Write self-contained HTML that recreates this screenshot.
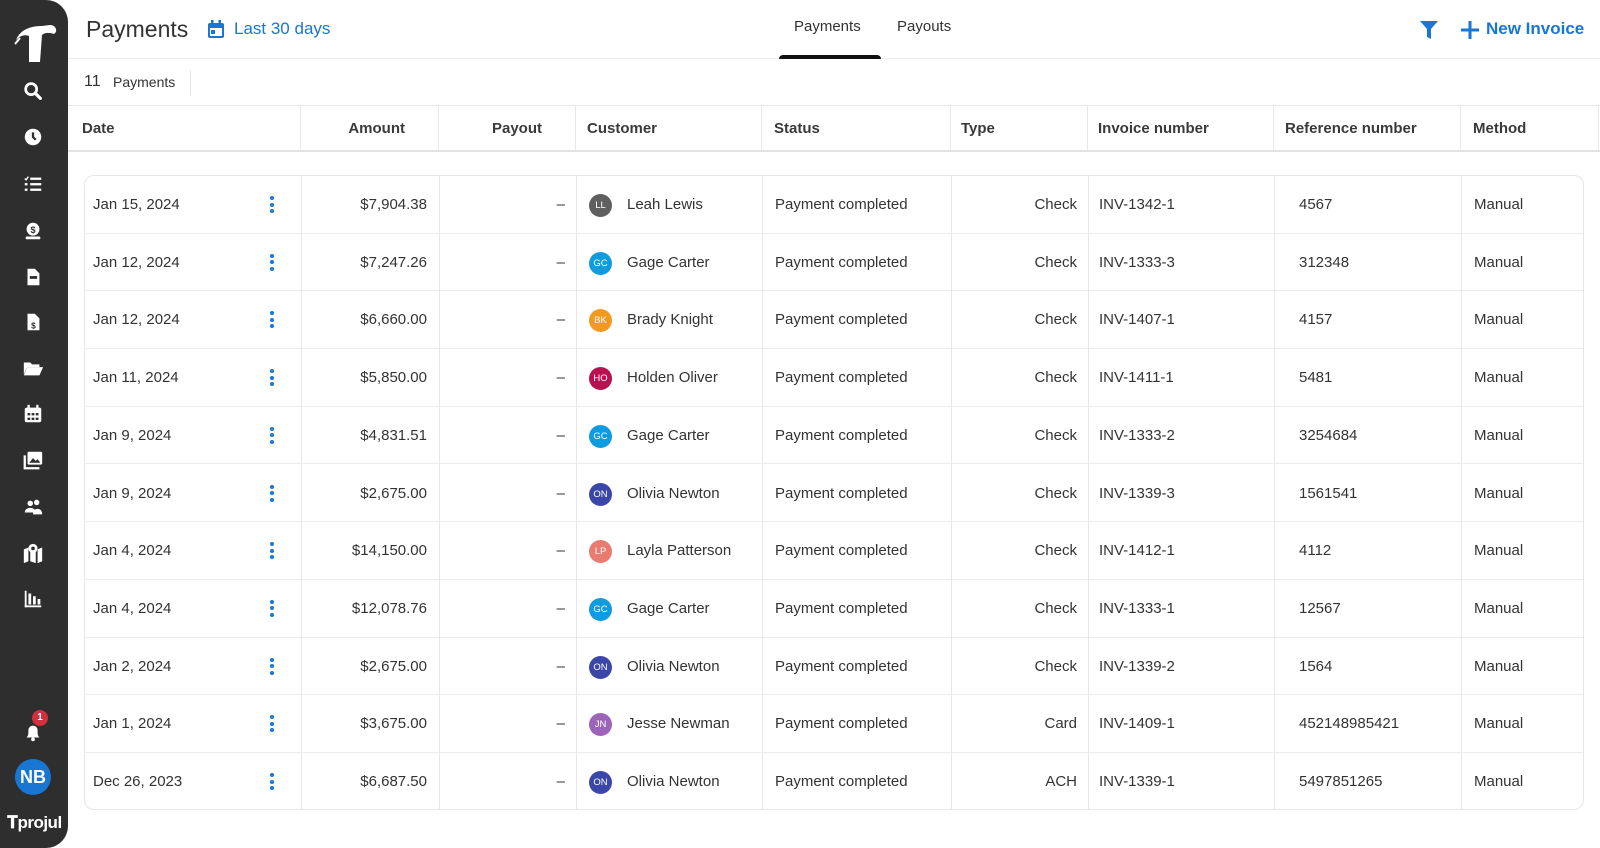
<!DOCTYPE html>
<html><head><meta charset="utf-8"><style>
*{box-sizing:border-box;margin:0;padding:0}
body{width:1600px;height:848px;overflow:hidden;background:#fff;font-family:"Liberation Sans",sans-serif;color:#333;position:relative}
.sb{position:absolute;left:0;top:0;width:68px;height:848px;background:#2e2e2e;border-radius:0 22px 22px 0}
.ic{position:absolute;left:22px;width:22px;height:22px}
.top{position:absolute;left:68px;top:0;right:0;height:59px;border-bottom:1px solid #eee}
.abs{position:absolute;white-space:nowrap}
.hdr{position:absolute;left:68px;top:105px;width:1532px;height:47px;border-top:1px solid #e8e8e8;border-bottom:2px solid #e3e3e3;font-weight:bold;font-size:15px;color:#3a3a3a}
.vl{position:absolute;top:0;bottom:0;width:1px;background:#e8e8e8}
.card{position:absolute;left:84px;top:175px;width:1500px;height:635px;border:1px solid #e6e6e6;border-radius:10px;overflow:hidden}
.row{position:absolute;left:0;width:1500px;height:57.7px;border-bottom:1px solid #ececec;font-size:15px;color:#333}
.row span{position:absolute;top:20px;white-space:nowrap}
.av{position:absolute;top:18px;width:23px;height:23px;border-radius:50%;color:#fff;font-size:9.5px;text-align:center;line-height:23px}
.dots{position:absolute;left:185px;top:20px;width:4px}
.dots i{display:block;width:4px;height:4px;border-radius:50%;background:#1976d2;margin-bottom:2.5px}
</style></head><body>
<div class="sb">
<svg style="position:absolute;left:12px;top:22px" width="46" height="42" viewBox="0 0 46 42"><path d="M4 18 C8 8 18 4 30 4 L38 3 C42 3 45 6 44 10 L42 12 C36 10 32 11 30 13 L28 40 L17 40 L17 14 C12 12 8 14 4 18Z" fill="#fff"/><path d="M3 22 L8 16" stroke="#fff" stroke-width="2"/></svg>
<svg class="ic" style="top:80px" viewBox="0 0 24 24"><circle cx="10" cy="10" r="6" stroke="#fff" stroke-width="3" fill="none"/><path d="M14.5 14.5 L20 20" stroke="#fff" stroke-width="3.5" stroke-linecap="round"/></svg>
<svg class="ic" style="top:126px" viewBox="0 0 24 24"><circle cx="12" cy="12" r="9" fill="#fff"/><path d="M12 7v5l3 3" stroke="#2e2e2e" stroke-width="2.5" fill="none"/></svg>
<svg class="ic" style="top:173px" viewBox="0 0 24 24" fill="#fff"><rect x="9" y="5" width="12" height="2.5"/><rect x="9" y="11" width="12" height="2.5"/><rect x="9" y="17" width="12" height="2.5"/><rect x="3" y="11" width="3" height="2.5"/><rect x="3" y="17" width="3" height="2.5"/><path d="M3 6l1.5 1.5L7 4" stroke="#fff" stroke-width="1.5" fill="none"/></svg>
<svg class="ic" style="top:220px" viewBox="0 0 24 24" fill="#fff"><circle cx="12" cy="10" r="7"/><rect x="4" y="18" width="16" height="3" rx="1"/><text x="12" y="14" font-size="10" text-anchor="middle" fill="#2e2e2e" font-weight="bold">$</text></svg>
<svg class="ic" style="top:266px" viewBox="0 0 24 24" fill="#fff"><path d="M6 3h8l5 5v13H6z"/><rect x="8.5" y="11" width="8" height="3" fill="#2e2e2e"/></svg>
<svg class="ic" style="top:311px" viewBox="0 0 24 24" fill="#fff"><path d="M6 3h8l5 5v13H6z"/><text x="12.5" y="19" font-size="9" text-anchor="middle" fill="#2e2e2e" font-weight="bold">$</text></svg>
<svg class="ic" style="top:357px" viewBox="0 0 24 24" fill="#fff"><path d="M2 6h7l2 2h8v3H6L2 19z"/><path d="M6 11h17l-4 9H2z"/></svg>
<svg class="ic" style="top:403px" viewBox="0 0 24 24" fill="#fff"><rect x="3" y="5" width="18" height="16" rx="2"/><rect x="6" y="2" width="2.5" height="5"/><rect x="15.5" y="2" width="2.5" height="5"/><g fill="#2e2e2e"><rect x="6" y="11" width="3" height="2.5"/><rect x="10.5" y="11" width="3" height="2.5"/><rect x="15" y="11" width="3" height="2.5"/><rect x="6" y="16" width="3" height="2.5"/><rect x="10.5" y="16" width="3" height="2.5"/><rect x="15" y="16" width="3" height="2.5"/></g></svg>
<svg class="ic" style="top:449px" viewBox="0 0 24 24" fill="#fff"><rect x="6" y="3" width="16" height="14" rx="1.5"/><path d="M3 7v14h16" stroke="#fff" stroke-width="2.5" fill="none"/><path d="M8 15l4-5 3 3 2-2 3 4z" fill="#2e2e2e"/></svg>
<svg class="ic" style="top:496px" viewBox="0 0 24 24" fill="#fff"><circle cx="9" cy="8" r="3"/><circle cx="16" cy="7" r="3"/><path d="M3 18c0-4 4-5 6-5s6 1 6 5z"/><path d="M12 20c0-4 2-6 5-6s5 2 5 6z"/></svg>
<svg class="ic" style="top:542px" viewBox="0 0 24 24" fill="#fff"><path d="M2 8l5-2v15l-5 2z M9 6l6 2v15l-6-2z M17 8l5-2v15l-5 2z"/><circle cx="12" cy="7" r="5"/><circle cx="12" cy="7" r="2" fill="#2e2e2e"/></svg>
<svg class="ic" style="top:588px" viewBox="0 0 24 24" fill="#fff"><rect x="3" y="3" width="2" height="18"/><rect x="3" y="19" width="18" height="2"/><rect x="7" y="6" width="3" height="12"/><rect x="12" y="9" width="3" height="9"/><rect x="17" y="12" width="3" height="6"/></svg>
<svg class="ic" style="top:721px" viewBox="0 0 24 24" fill="#fff"><path d="M5 18c2-2 2-4 2-8a5 5 0 0 1 10 0c0 4 0 6 2 8z"/><circle cx="12" cy="20" r="2"/></svg>
<div class="abs" style="left:32px;top:710px;width:16px;height:16px;border-radius:50%;background:#d32f3c;color:#fff;font-size:10px;text-align:center;line-height:16px;font-weight:bold">1</div>
<div class="abs" style="left:15px;top:759px;width:36px;height:36px;border-radius:50%;background:#1976d2;color:#fff;font-size:18px;text-align:center;line-height:36px;font-weight:bold">NB</div>
<div class="abs" style="left:7px;top:813px;color:#fff;font-size:17px;font-weight:bold;letter-spacing:-0.5px">&#x1D413;projul</div>
</div>
<div class="top">
<div class="abs" style="left:18px;top:16px;font-size:23px;color:#333">Payments</div>
<svg class="abs" style="left:140px;top:20px" width="16" height="18" viewBox="0 0 16 18" fill="#1976d2"><rect x="0" y="3" width="16" height="15" rx="2"/><rect x="3" y="0" width="2.5" height="4"/><rect x="10.5" y="0" width="2.5" height="4"/><rect x="2" y="8" width="12" height="8" fill="#fff"/><rect x="3" y="10" width="4" height="4"/></svg>
<div class="abs" style="left:166px;top:19px;font-size:17px;color:#1976d2">Last 30 days</div>
<div class="abs" style="left:726px;top:18px;font-size:15px;color:#333">Payments</div>
<div class="abs" style="left:711px;top:55px;width:102px;height:4px;background:#111;border-radius:4px 4px 0 0"></div>
<div class="abs" style="left:829px;top:18px;font-size:15px;color:#333">Payouts</div>
<svg class="abs" style="left:1351px;top:20px" width="20" height="20" viewBox="0 0 20 20" fill="#1976d2"><path d="M1 1h18l-7 8v10l-4-2V9z"/></svg>
<svg class="abs" style="left:1393px;top:21px" width="18" height="18" viewBox="0 0 18 18" fill="#1976d2"><rect x="7.5" y="0" width="3" height="18"/><rect x="0" y="7.5" width="18" height="3"/></svg>
<div class="abs" style="left:1418px;top:19px;font-size:17px;color:#1976d2;font-weight:bold">New Invoice</div>
</div>
<div class="abs" style="left:84px;top:73px;font-size:16px;color:#333">11</div>
<div class="abs" style="left:113px;top:74px;font-size:14px;color:#333">Payments</div>
<div class="abs" style="left:190px;top:70px;width:1px;height:26px;background:#e6e6e6"></div>
<div class="hdr">
<div class="vl" style="left:232px"></div><div class="vl" style="left:370px"></div><div class="vl" style="left:507px"></div><div class="vl" style="left:693px"></div><div class="vl" style="left:882px"></div><div class="vl" style="left:1019px"></div><div class="vl" style="left:1205px"></div><div class="vl" style="left:1392px"></div><div class="vl" style="left:1530px"></div>
<span class="abs" style="left:14px;top:14px">Date</span>
<span class="abs" style="right:1195px;top:14px">Amount</span>
<span class="abs" style="right:1058px;top:14px">Payout</span>
<span class="abs" style="left:519px;top:14px">Customer</span>
<span class="abs" style="left:706px;top:14px">Status</span>
<span class="abs" style="left:893px;top:14px">Type</span>
<span class="abs" style="left:1030px;top:14px">Invoice number</span>
<span class="abs" style="left:1217px;top:14px">Reference number</span>
<span class="abs" style="left:1405px;top:14px">Method</span>
</div>
<div class="card">
<div class="vl" style="left:216px"></div><div class="vl" style="left:354px"></div><div class="vl" style="left:491px"></div><div class="vl" style="left:677px"></div><div class="vl" style="left:866px"></div><div class="vl" style="left:1003px"></div><div class="vl" style="left:1189px"></div><div class="vl" style="left:1376px"></div>
<div id="rows"></div>
</div>
<script>
var d=[["Jan 15, 2024","$7,904.38","LL","#5f5f5f","Leah Lewis","Check","INV-1342-1","4567"],
["Jan 12, 2024","$7,247.26","GC","#0f9be0","Gage Carter","Check","INV-1333-3","312348"],
["Jan 12, 2024","$6,660.00","BK","#f29a1f","Brady Knight","Check","INV-1407-1","4157"],
["Jan 11, 2024","$5,850.00","HO","#b8114f","Holden Oliver","Check","INV-1411-1","5481"],
["Jan 9, 2024","$4,831.51","GC","#0f9be0","Gage Carter","Check","INV-1333-2","3254684"],
["Jan 9, 2024","$2,675.00","ON","#3b47a8","Olivia Newton","Check","INV-1339-3","1561541"],
["Jan 4, 2024","$14,150.00","LP","#ea7b70","Layla Patterson","Check","INV-1412-1","4112"],
["Jan 4, 2024","$12,078.76","GC","#0f9be0","Gage Carter","Check","INV-1333-1","12567"],
["Jan 2, 2024","$2,675.00","ON","#3b47a8","Olivia Newton","Check","INV-1339-2","1564"],
["Jan 1, 2024","$3,675.00","JN","#9c64b8","Jesse Newman","Card","INV-1409-1","452148985421"],
["Dec 26, 2023","$6,687.50","ON","#3b47a8","Olivia Newton","ACH","INV-1339-1","5497851265"]];
var h="";d.forEach(function(r,i){h+='<div class="row" style="top:'+(i*57.7)+'px;'+(i==10?'border-bottom:none':'')+'"><span style="left:8px">'+r[0]+'</span><div class="dots"><i></i><i></i><i></i></div><span style="right:1158px">'+r[1]+'</span><span style="right:1020px">–</span><div class="av" style="left:504px;background:'+r[3]+'">'+r[2]+'</div><span style="left:542px">'+r[4]+'</span><span style="left:690px">Payment completed</span><span style="right:508px">'+r[5]+'</span><span style="left:1014px">'+r[6]+'</span><span style="left:1214px">'+r[7]+'</span><span style="left:1389px">Manual</span></div>'});
document.getElementById("rows").innerHTML=h;
</script>
</body></html>
